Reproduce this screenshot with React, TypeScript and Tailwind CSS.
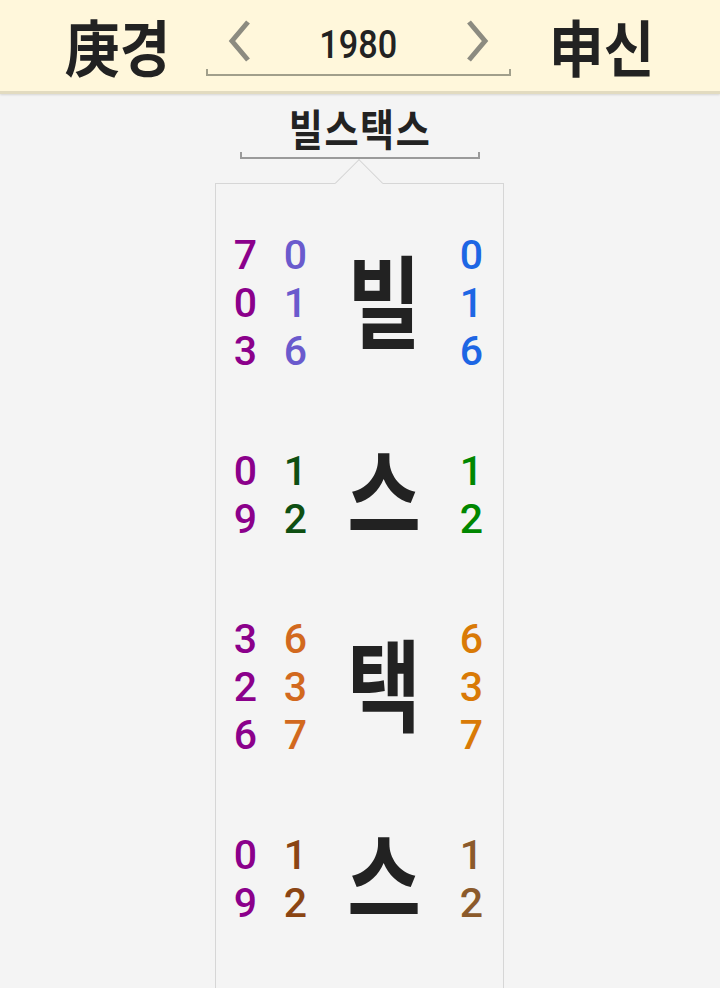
const rows = [
  { ch: "빌", a: ["7", "0", "3"], b: ["0", "1", "6"], c: ["0", "1", "6"], bc: "text-[#6a5acd]", cc: "text-[#1d66e4]" },
  { ch: "스", a: ["0", "9"], b: ["1", "2"], c: ["1", "2"], bc: "text-[#0e4f12]", cc: "text-[#008700]" },
  { ch: "택", a: ["3", "2", "6"], b: ["6", "3", "7"], c: ["6", "3", "7"], bc: "text-[#d2691e]", cc: "text-[#d97a06]" },
  { ch: "스", a: ["0", "9"], b: ["1", "2"], c: ["1", "2"], bc: "text-[#8b4513]", cc: "text-[#8b5a2b]" },
];

function Digits({ items, color }: { items: string[]; color: string }) {
  return (
    <div className={`flex w-[50px] flex-col items-center font-['Roboto',sans-serif] text-[41px] font-medium leading-[48px] ${color}`}>
      {items.map((d, i) => (
        <span key={i}>{d}</span>
      ))}
    </div>
  );
}

function Chevron({ dir }: { dir: "left" | "right" }) {
  return (
    <svg width="26" height="44" viewBox="0 0 26 44" fill="none">
      <polyline
        points={dir === "left" ? "22,3 6,22 22,41" : "4,3 20,22 4,41"}
        stroke="#8c8b80"
        strokeWidth="5"
      />
    </svg>
  );
}

export default function App() {
  return (
    <div className="min-h-[988px] bg-[#f4f4f4] font-['Noto_Sans_CJK_KR',sans-serif] text-[#222]">
      <header className="flex h-[94px] items-center justify-center border-b-[3px] border-[#e2dbc0] bg-[#fff7db] shadow-[0_1px_2px_rgba(0,0,0,0.12)]">
        <div className="flex w-[104px] justify-center">
          <span className="shrink-0 scale-x-[0.9] whitespace-nowrap text-[61px] font-bold leading-none">庚경</span>
        </div>
        <div className="ml-[36px] flex w-[305px] flex-col">
          <div className="flex h-[52px] items-center justify-between px-[20px]">
            <Chevron dir="left" />
            <span className="mt-[8px] scale-x-[0.9] font-['Roboto',sans-serif] text-[38px] font-medium leading-none">1980</span>
            <Chevron dir="right" />
          </div>
          <div className="mt-[2px] h-[7px] border-x-2 border-b-2 border-[#a19f8b]" />
        </div>
        <div className="ml-[39px] flex w-[104px] justify-center">
          <span className="shrink-0 scale-x-[0.9] whitespace-nowrap text-[61px] font-bold leading-none">申신</span>
        </div>
      </header>

      <div className="flex flex-col items-center pt-[8px]">
        <div className="scale-x-[0.86] whitespace-nowrap text-[43px] font-bold leading-[50px] tracking-[2px]">빌스택스</div>
        <div className="h-[7px] w-[240px] border-x-2 border-b-2 border-[#9a9a9a]" />

        <div className="relative mr-[2px] mt-[24px] w-[289px] border border-[#d6d6d6] pb-[20px] pl-[5px] pr-[5px] pt-[23px]">
          <div className="absolute left-[126px] top-[-18px] h-[34px] w-[34px] rotate-45 border-l border-t border-[#d6d6d6] bg-[#f4f4f4]" />
          {rows.map((r, i) => (
            <div key={i} className="relative flex h-[192px] items-center">
              <Digits items={r.a} color="text-[#8b008b]" />
              <Digits items={r.b} color={r.bc} />
              <div className="flex w-[126px] justify-center">
                <span className="-mt-[12px] scale-x-[0.8] text-[100px] font-bold leading-none">{r.ch}</span>
              </div>
              <Digits items={r.c} color={r.cc} />
            </div>
          ))}
        </div>
      </div>
    </div>
  );
}
